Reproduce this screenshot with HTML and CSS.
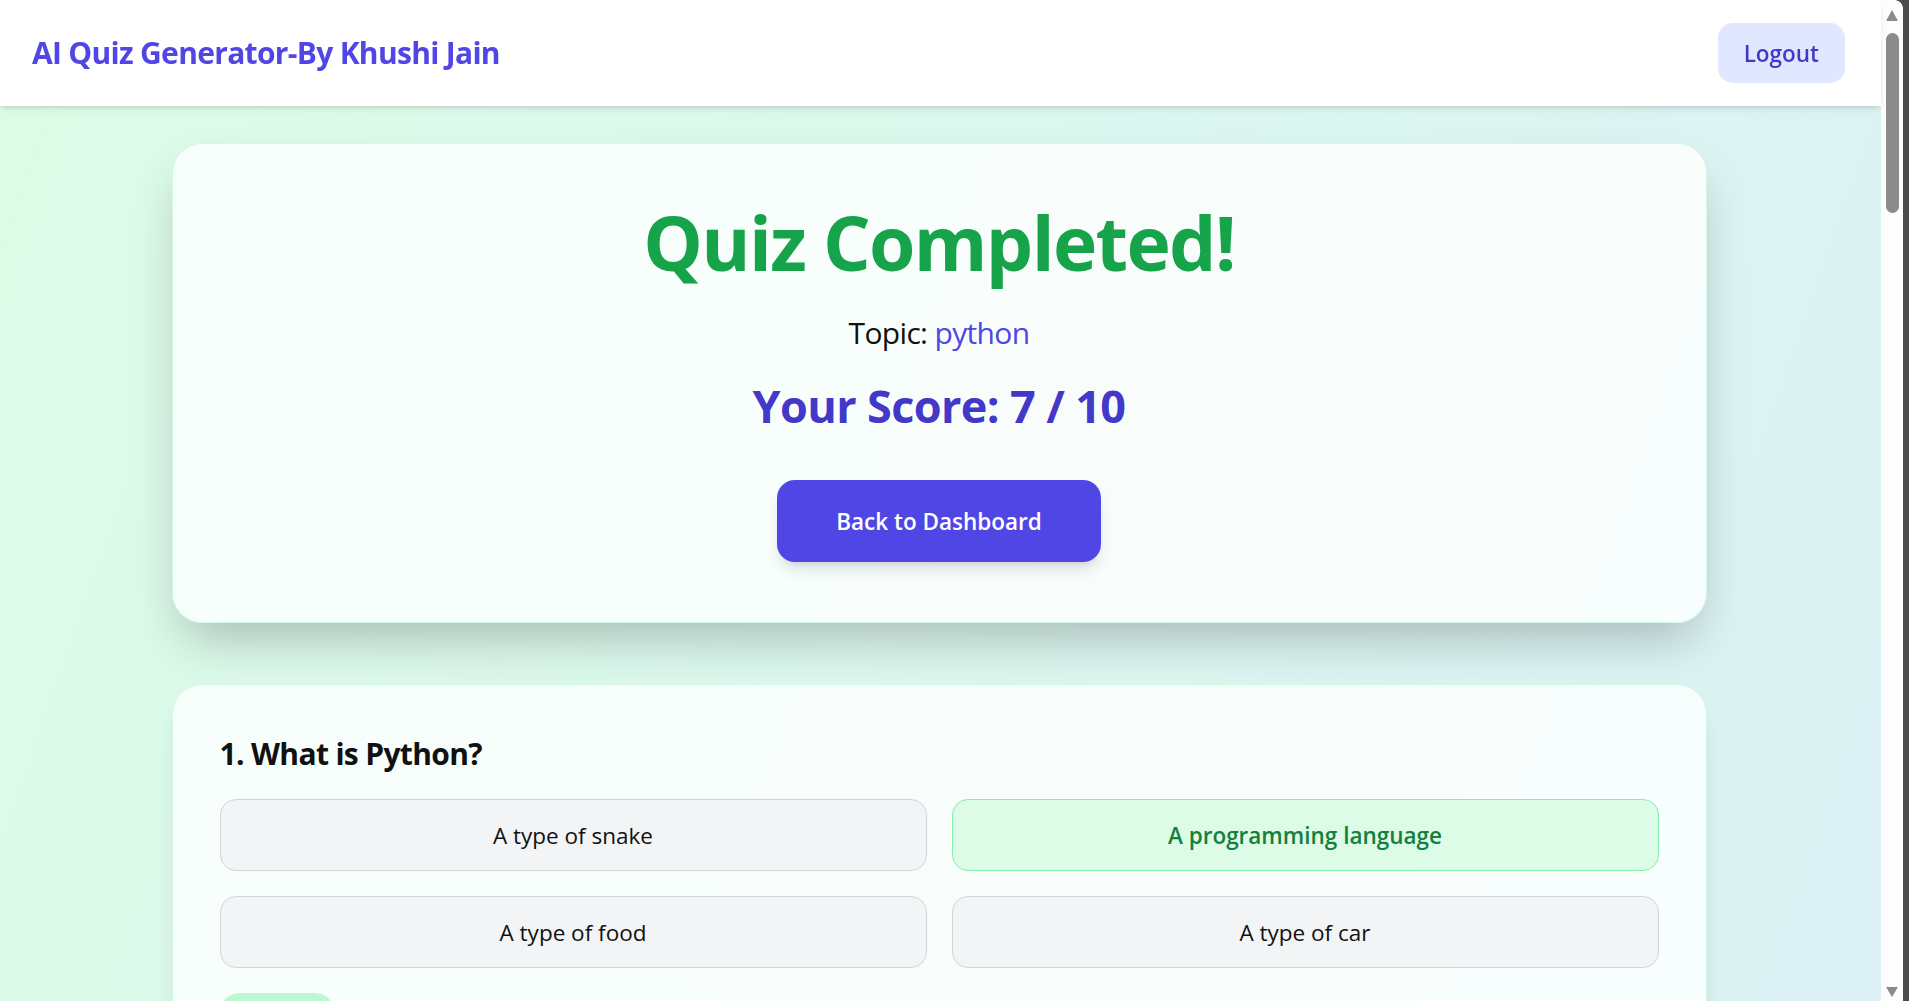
FILE: index.html
```html
<!DOCTYPE html>
<html lang="en">
<head>
<meta charset="utf-8">
<title>AI Quiz Generator</title>
<link rel="stylesheet" href="styles.css">
</head>
<body>
<div class="app">
  <header class="topbar">
    <h1 class="brand">AI Quiz Generator-By Khushi Jain</h1>
    <button class="logout">Logout</button>
  </header>
  <main class="content">
    <section class="card summary">
      <h2 class="summary-title">Quiz Completed!</h2>
      <p class="topic">Topic: <span class="topic-name">python</span></p>
      <p class="score">Your Score: 7 / 10</p>
      <button class="back-btn">Back to Dashboard</button>
    </section>

    <section class="card question">
      <h3 class="q-title">1. What is Python?</h3>
      <div class="options">
        <div class="option">A type of snake</div>
        <div class="option correct">A programming language</div>
        <div class="option">A type of food</div>
        <div class="option">A type of car</div>
      </div>
      <span class="badge ok">Correct</span>
    </section>

    <section class="card question">
      <h3 class="q-title">2. Which keyword is used to define a function in Python?</h3>
      <div class="options">
        <div class="option correct">def</div>
        <div class="option">func</div>
        <div class="option">function</div>
        <div class="option">define</div>
      </div>
      <span class="badge ok">Correct</span>
    </section>

    <section class="card question">
      <h3 class="q-title">3. Which of the following data types is mutable?</h3>
      <div class="options">
        <div class="option">tuple</div>
        <div class="option">string</div>
        <div class="option correct">list</div>
        <div class="option">int</div>
      </div>
      <span class="badge ok">Correct</span>
    </section>

    <section class="card question">
      <h3 class="q-title">4. What is the output of print(2 ** 3)?</h3>
      <div class="options">
        <div class="option wrong">6</div>
        <div class="option correct">8</div>
        <div class="option">9</div>
        <div class="option">5</div>
      </div>
      <span class="badge bad">Incorrect</span>
    </section>

    <section class="card question">
      <h3 class="q-title">5. Which symbol is used to write a comment in Python?</h3>
      <div class="options">
        <div class="option">//</div>
        <div class="option correct">#</div>
        <div class="option">&lt;!-- --&gt;</div>
        <div class="option">/* */</div>
      </div>
      <span class="badge ok">Correct</span>
    </section>

    <section class="card question">
      <h3 class="q-title">6. What does the len() function return?</h3>
      <div class="options">
        <div class="option correct">The number of items in an object</div>
        <div class="option">The last item of a list</div>
        <div class="option">The memory size of an object</div>
        <div class="option">The type of an object</div>
      </div>
      <span class="badge ok">Correct</span>
    </section>

    <section class="card question">
      <h3 class="q-title">7. Which block is used to handle exceptions in Python?</h3>
      <div class="options">
        <div class="option wrong">catch</div>
        <div class="option">finally only</div>
        <div class="option correct">try / except</div>
        <div class="option">throw</div>
      </div>
      <span class="badge bad">Incorrect</span>
    </section>

    <section class="card question">
      <h3 class="q-title">8. What is the correct file extension for Python files?</h3>
      <div class="options">
        <div class="option">.pt</div>
        <div class="option correct">.py</div>
        <div class="option">.pyt</div>
        <div class="option">.python</div>
      </div>
      <span class="badge ok">Correct</span>
    </section>

    <section class="card question">
      <h3 class="q-title">9. Which method adds an element to the end of a list?</h3>
      <div class="options">
        <div class="option correct">append()</div>
        <div class="option">add()</div>
        <div class="option">insert()</div>
        <div class="option">push()</div>
      </div>
      <span class="badge ok">Correct</span>
    </section>

    <section class="card question">
      <h3 class="q-title">10. What is the type of the result of 3 / 2 in Python 3?</h3>
      <div class="options">
        <div class="option wrong">int</div>
        <div class="option correct">float</div>
        <div class="option">str</div>
        <div class="option">complex</div>
      </div>
      <span class="badge bad">Incorrect</span>
    </section>
  </main>
</div>

<div class="scrollbar" aria-hidden="true">
  <span class="sb-arrow sb-up"></span>
  <span class="sb-thumb"></span>
  <span class="sb-arrow sb-down"></span>
</div>
</body>
</html>
```

FILE: styles.css
```css
* {
  box-sizing: border-box;
}

body {
  margin: 0;
  font-family: "Open Sans", "Noto Sans", "Liberation Sans", sans-serif;
  color: #111827;
}

.app {
  min-height: 100vh;
  margin-right: 28px;
  background: linear-gradient(to bottom right, #dcfce7, #dbeafe);
}

/* window scrollbar drawn over the right edge */
.scrollbar {
  position: fixed;
  top: 0;
  right: 0;
  width: 28px;
  height: 100vh;
  display: flex;
  flex-direction: column;
  align-items: flex-start;
  background: linear-gradient(90deg, #fdfdfd 22px, #4a4a4f 22px);
}

.scrollbar::before {
  content: "";
  position: absolute;
  top: 0;
  left: 14px;
  width: 8px;
  height: 8px;
  background: radial-gradient(circle at 0 100%, transparent 7.5px, #4a4a4f 8px);
}

.sb-arrow {
  display: block;
  width: 0;
  height: 0;
  margin-left: 5px;
  border-left: 6.5px solid transparent;
  border-right: 6.5px solid transparent;
}

.sb-up {
  margin-top: 10px;
  border-bottom: 11px solid #8b8b8b;
}

.sb-down {
  margin-top: auto;
  margin-bottom: 4px;
  border-top: 10px solid #8b8b8b;
}

.sb-thumb {
  display: block;
  width: 13px;
  height: 180px;
  margin: 12px 0 0 5px;
  border-radius: 7px;
  background: #8b8b8b;
}

.topbar {
  position: relative;
  z-index: 1;
  height: 106px;
  display: flex;
  align-items: center;
  justify-content: space-between;
  padding: 0 36px 0 32px;
  background: #ffffff;
  box-shadow: 0 4px 6px -1px rgba(0, 0, 0, 0.1), 0 2px 4px -2px rgba(0, 0, 0, 0.1);
}

.brand {
  margin: 0;
  font-size: 30px;
  line-height: 40px;
  font-weight: 700;
  letter-spacing: -0.023em;
  color: #4f46e5;
}

.logout {
  height: 60px;
  padding: 0 26px;
  border: none;
  border-radius: 15px;
  background: #e0e7ff;
  color: #4338ca;
  font-family: inherit;
  font-size: 22.5px;
  font-weight: 600;
  cursor: pointer;
}

.content {
  display: flex;
  flex-direction: column;
  align-items: center;
  gap: 61px;
  padding: 37px 3px 60px 0;
}

.card {
  width: 1535px;
  background: rgba(255, 255, 255, 0.8);
  border: 1px solid #d1fae5;
  border-radius: 30px;
}

.summary {
  padding: 61px 60px 60px;
  text-align: center;
  box-shadow: 0 25px 50px -12px rgba(0, 0, 0, 0.25);
}

.summary-title {
  margin: 0 0 33px;
  font-size: 75px;
  line-height: 1;
  font-weight: 700;
  letter-spacing: -0.022em;
  color: #16a34a;
}

.topic {
  margin: 0 0 28px;
  font-size: 30px;
  line-height: 40px;
  letter-spacing: -0.022em;
  color: #111111;
}

.topic-name {
  color: #4f46e5;
}

.score {
  margin: 0 0 49px;
  font-size: 45px;
  line-height: 50px;
  font-weight: 700;
  letter-spacing: -0.014em;
  color: #4338ca;
}

.back-btn {
  display: inline-flex;
  align-items: center;
  justify-content: center;
  width: 324px;
  height: 82px;
  border: none;
  border-radius: 18px;
  background: #4f46e5;
  color: #ffffff;
  font-family: inherit;
  font-size: 22.5px;
  font-weight: 600;
  box-shadow: 0 10px 15px -3px rgba(0, 0, 0, 0.12), 0 4px 6px -4px rgba(0, 0, 0, 0.1);
  cursor: pointer;
}

.question {
  padding: 49px 47px 49px;
  box-shadow: 0 20px 25px -5px rgba(0, 0, 0, 0.1), 0 8px 10px -6px rgba(0, 0, 0, 0.1);
}

.q-title {
  margin: 0 0 25px;
  font-size: 30px;
  line-height: 40px;
  font-weight: 700;
  letter-spacing: -0.022em;
  color: #111111;
}

.options {
  display: grid;
  grid-template-columns: 1fr 1fr;
  gap: 25px;
}

.option {
  padding: 18px 20px 16px;
  border: 1px solid #d1d5db;
  border-radius: 16px;
  background: #f3f4f6;
  font-size: 22.5px;
  line-height: 36px;
  text-align: center;
  color: #111111;
}

.option.correct {
  background: #dcfce7;
  border-color: #86efac;
  color: #15803d;
  font-weight: 600;
}

.option.wrong {
  background: #fee2e2;
  border-color: #fca5a5;
  color: #b91c1c;
  font-weight: 600;
}

.badge {
  display: inline-block;
  margin-top: 25px;
  padding: 6px 22px;
  border-radius: 999px;
  font-size: 20px;
  line-height: 28px;
  font-weight: 600;
}

.badge.ok {
  background: #bbf7d0;
  color: #166534;
}

.badge.bad {
  background: #fecaca;
  color: #991b1b;
}
```
